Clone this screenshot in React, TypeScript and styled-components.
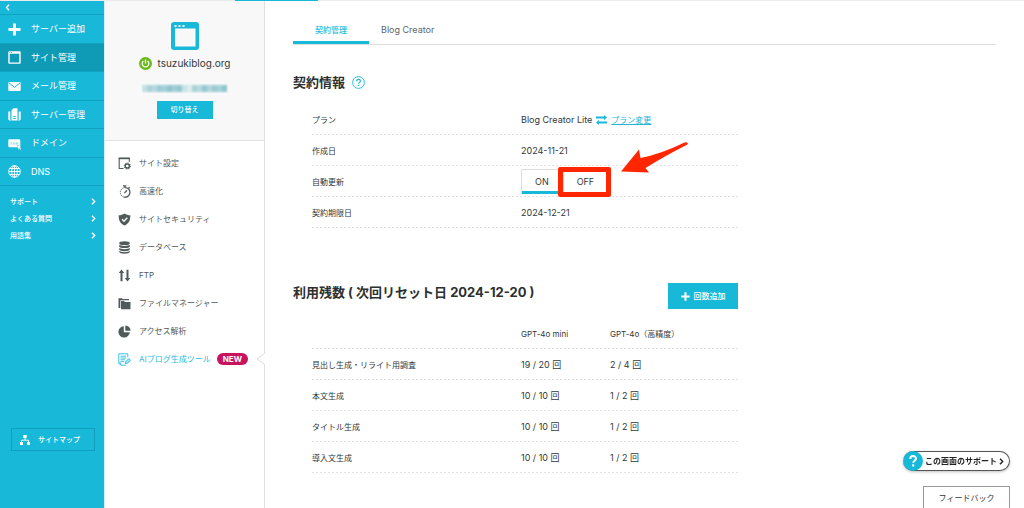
import React from "react";
import styled, { createGlobalStyle, css } from "styled-components";

const cyan = "#18b8d9";
const ink = "#333838";

const GlobalStyle = createGlobalStyle`
  *, *::before, *::after { box-sizing: border-box; }
  body {
    margin: 0;
    background: #fff;
    color: ${ink};
    font-family: Inter, "Noto Sans CJK JP", sans-serif;
    font-size: 8px;
    line-height: 12px;
  }
  button { font: inherit; color: inherit; border: 0; padding: 0; background: none; cursor: pointer; }
  a { color: inherit; text-decoration: none; }
  h1, h2, p, ul { margin: 0; padding: 0; }
  ul { list-style: none; }
  svg { display: block; flex: none; }
`;

const Page = styled.div`
  display: flex;
  flex-direction: column;
  min-height: 100vh;
`;

const TopStrip = styled.div`
  display: flex;
  height: 1px;
  background: #ebebeb;
  padding-left: 235px;
`;

const TopStripActive = styled.span`
  width: 83px;
  background: ${cyan};
`;

const Columns = styled.div`
  flex: 1;
  display: flex;
`;

const Sidebar = styled.nav`
  width: 104px;
  flex: none;
  display: flex;
  flex-direction: column;
  background: ${cyan};
  color: #fff;
`;

const Collapse = styled.button`
  height: 13px;
  padding-left: 5px;
`;

const PrimaryList = styled.ul`
  display: grid;
  grid-template-rows: repeat(6, 1fr);
  height: 172px;
  border-bottom: 1px solid #10a2c0;
`;

const PrimaryLink = styled.a<{ $active?: boolean }>`
  display: flex;
  align-items: center;
  gap: 10px;
  height: 100%;
  padding: 1px 0 0 8px;
  border-top: 1px solid #10a2c0;
  font-size: 9px;
  ${(p) => p.$active && css`background: #0f9ab6;`}
`;

const SupportList = styled.ul`
  padding: 7px 8px 0 10px;
`;

const SupportLink = styled.a`
  display: flex;
  align-items: center;
  justify-content: space-between;
  height: 17px;
  font-size: 7px;
  font-weight: 500;
`;

const SiteMapLink = styled.a`
  display: flex;
  align-items: center;
  gap: 8px;
  height: 23px;
  margin: auto 9px 57px 11px;
  padding-left: 8px;
  border: 1px solid #10a0be;
  font-size: 7px;
  font-weight: 500;
`;

const SitePanel = styled.aside`
  width: 161px;
  flex: none;
  border-left: 1px solid #d5eff6;
  border-right: 1px solid #dfdfdf;
`;

const SiteCard = styled.section`
  display: flex;
  flex-direction: column;
  align-items: center;
  height: 140px;
  padding-top: 21px;
  background: #f8f8f8;
  border-bottom: 1px solid #e2e2e2;
`;

const SiteName = styled.p`
  display: flex;
  align-items: center;
  gap: 6px;
  margin-top: 6px;
  font-size: 10px;
  line-height: 14px;
`;

const Mosaic = styled.div`
  margin: 13px 0 8px;
`;

const SwitchButton = styled.button`
  width: 56px;
  height: 18px;
  background: ${cyan};
  color: #fff;
  font-size: 7px;
  font-weight: 500;
`;

const SiteMenu = styled.ul`
  padding-top: 8px;
`;

const SiteMenuLink = styled.a<{ $active?: boolean }>`
  position: relative;
  display: flex;
  align-items: center;
  gap: 8px;
  height: 28px;
  padding-left: 13px;
  color: ${(p) => (p.$active ? "#27bde0" : "#505a5a")};
`;

const Notch = styled.svg`
  position: absolute;
  right: -1px;
  top: 7px;
`;

const NewBadge = styled.span`
  margin-left: -2px;
  padding: 0 6px;
  border-radius: 6px;
  background: #c8145f;
  color: #fff;
  font-weight: 700;
`;

const Main = styled.main`
  flex: 1;
  min-width: 0;
  padding: 13px 28px 0;
`;

const Tabs = styled.nav`
  display: flex;
  border-bottom: 1px solid #dedede;
`;

const Tab = styled.a<{ $active?: boolean }>`
  height: 30px;
  padding: 10px 12px 0;
  color: #606868;
  font-size: 9px;
  ${(p) =>
    p.$active &&
    css`
      width: 76px;
      padding: 10px 0 0;
      text-align: center;
      font-size: 8px;
      font-weight: 500;
      color: #27bde0;
      border-bottom: 3px solid ${cyan};
    `}
`;

const Section = styled.section<{ $gap: number }>`
  max-width: 445px;
  padding-top: ${(p) => p.$gap}px;
`;

const SectionHead = styled.div`
  display: flex;
  align-items: flex-start;
  height: 26px;
`;

const Heading = styled.h2`
  display: flex;
  align-items: center;
  gap: 7px;
  font-size: 13px;
  line-height: 18px;
  font-weight: 700;
  color: #2b3030;
`;

const AddButton = styled.button`
  display: flex;
  align-items: center;
  justify-content: center;
  gap: 4px;
  width: 70px;
  height: 26px;
  margin-left: auto;
  background: ${cyan};
  color: #fff;
  font-weight: 500;
`;

const TableWrap = styled.div<{ $top: number }>`
  padding: ${(p) => p.$top}px 0 0 19px;
`;

const DataTable = styled.table`
  width: 100%;
  border-collapse: separate;
  border-spacing: 0;
  table-layout: fixed;

  tr {
    background: repeating-linear-gradient(90deg, #e0e0e0 0 2px, transparent 2px 4px) left bottom / 100% 1px no-repeat;
  }
  th, td {
    height: 31px;
    padding: 0;
    text-align: left;
    font-weight: 400;
  }
  td { font-size: 9px; }
`;

const Col = styled.col<{ $w?: number }>`
  width: ${(p) => (p.$w ? `${p.$w}px` : "auto")};
`;

const PlanLine = styled.div`
  display: flex;
  align-items: center;
  gap: 4px;
`;

const PlanLink = styled.a`
  color: #27b4d6;
  font-size: 8px;
  text-decoration: underline;
`;

const Toggle = styled.div`
  position: relative;
  display: flex;
  width: max-content;
  height: 25px;
`;

const ToggleButton = styled.button<{ $on?: boolean }>`
  padding: 0 13px;
  border: 1px solid #ddd;
  border-bottom-width: 0;
  box-shadow: inset 0 ${(p) => (p.$on ? `-3px ${cyan}` : "-1px #ddd")};
`;

const Highlight = styled.span`
  position: absolute;
  left: 37px;
  top: -2px;
  width: 53px;
  height: 30px;
  border: 5px solid #ff2600;
  border-radius: 2px;
  pointer-events: none;
`;

const Arrow = styled.svg`
  position: absolute;
  left: 98px;
  top: -28px;
  pointer-events: none;
`;

const HelpPill = styled.button`
  position: fixed;
  right: 14px;
  bottom: 37px;
  display: flex;
  align-items: center;
  gap: 2px;
  height: 20px;
  padding-right: 5px;
  border: 1px solid #555;
  border-left: 0;
  border-radius: 10px;
  background: #fff;
  box-shadow: 0 1px 3px rgba(0, 0, 0, 0.25);
  font-weight: 700;
  color: #222;
`;

const Feedback = styled.button`
  position: fixed;
  right: 14px;
  bottom: 0;
  width: 87px;
  height: 22px;
  border: 1px solid #999;
  border-bottom: 0;
  background: #fff;
`;

const Chevron = ({ color = "#fff", flip = false }) => (
  <svg width="5" height="7" viewBox="0 0 5 7" fill="none" stroke={color} strokeWidth="1.4">
    <path d={flip ? "M4 .7 1.5 3.5 4 6.3" : "M1 .7 3.7 3.5 1 6.3"} />
  </svg>
);

const Plus = ({ size }: { size: number }) => (
  <svg width={size} height={size} viewBox="0 0 13 13" fill="#fff">
    <path d="M5 .5h3V5h4.5v3H8v4.5H5V8H.5V5H5z" />
  </svg>
);

const Icon = ({ children }: { children: React.ReactNode }) => (
  <svg width="13" height="13" viewBox="0 0 13 13" fill="currentColor">
    {children}
  </svg>
);

const primary = [
  { label: "サーバー追加", icon: <path d="M5 .5h3V5h4.5v3H8v4.5H5V8H.5V5H5z" /> },
  {
    label: "サイト管理",
    active: true,
    icon: <path fillRule="evenodd" d="M1.3.2h10.400a1 1 0 0 1 1 1v10.600a1 1 0 0 1-1 1H1.300a1 1 0 0 1-1-1V1.200a1 1 0 0 1 1-1zM1.700 2.800v8.600h9.600V2.800zM1.500 1.100v.8h.8v-.8zm1.500 0v.8h.8v-.8z" />,
  },
  {
    label: "メール管理",
    icon: (
      <>
        <rect x=".3" y="2" width="12.4" height="9" rx="1" />
        <path d="m.8 2.8 5.7 4.5 5.7-4.5" fill="none" stroke={cyan} strokeWidth="1" />
      </>
    ),
  },
  {
    label: "サーバー管理",
    icon: (
      <>
        <path d="M.3 3.500h2v8l.8 1H1.3l-1-1zM12.7 3.500h-2v8l-.8 1h1.8l1-1z" />
        <path fillRule="evenodd" d="M5.500.3h4V12.5h-6V2.3zM4.800 8v.8h3.400V8zm0 2v.8h3.400V10z" />
      </>
    ),
  },
  {
    label: "ドメイン",
    icon: (
      <>
        <rect x=".3" y="2.300" width="12" height="8" rx="1.3" />
        <path d="M2.5 6h1.600M5 6h1.600M7.500 6h2.600M2.500 7h1.600M5 7h1.600M7.500 7h2.600" stroke={cyan} strokeWidth=".5" />
        <path d="m9.200 8.200 4.300 1.600-1.400.9 1.300 1.500-1 .8-1.300-1.600-1 1.100z" stroke={cyan} strokeWidth=".4" />
      </>
    ),
  },
  {
    label: "DNS",
    icon: (
      <g fill="none" stroke="currentColor" strokeWidth=".9">
        <circle cx="6.5" cy="6.5" r="5.8" />
        <ellipse cx="6.5" cy="6.5" rx="2.8" ry="5.8" />
        <path d="M6.5.7v11.6M.7 6.5h11.6M1.6 3.5h9.8M1.6 9.5h9.8" />
      </g>
    ),
  },
];

const siteMenu = [
  {
    label: "サイト設定",
    icon: (
      <>
        <path d="M5.500 11.5H1.2V1.2h10.1v3.500" fill="none" stroke="currentColor" strokeWidth="1.1" />
        <path d="M.7.6h11.100v1.600H.7z" />
        <circle cx="9.3" cy="9" r="2.1" fill="none" stroke="currentColor" strokeWidth="1.5" />
        <circle cx="9.3" cy="9" r="3.1" fill="none" stroke="currentColor" strokeWidth="1" strokeDasharray="1.2 1.23" />
      </>
    ),
  },
  {
    label: "高速化",
    icon: (
      <g fill="none" stroke="currentColor">
        <path d="M6.8 2.6a4.8 4.8 0 1 1-1 9.4" strokeWidth="1.3" />
        <path d="M5.8 12a4.8 4.8 0 0 1 1-9.4" strokeWidth="1" strokeDasharray="1.3 .8" />
        <path d="M5 .8h3.4M6.7 .8v1.6M10.6 2.2l1.2 1.2" strokeWidth="1.2" />
        <path d="m6.4 8.1 2.6-2.8" strokeWidth="1.3" />
      </g>
    ),
  },
  {
    label: "サイトセキュリティ",
    icon: (
      <>
        <path d="M6.500.4c1.700 1.200 3.700 1.800 5.800 1.800.2 5-1.500 8.300-5.800 10.400C2.200 10.500.5 7.200.7 2.200 2.800 2.200 4.800 1.600 6.500.4z" />
        <path d="m4 6.300 2 2 3.300-3.600" fill="none" stroke="#fff" strokeWidth="1.300" />
      </>
    ),
  },
  {
    label: "データベース",
    icon: (
      <>
        <ellipse cx="6.500" cy="2.200" rx="5.300" ry="1.900" />
        <path d="M1.200 3.800c1.600 1.500 9 1.500 10.600 0v1.600c-.4 2.200-10.200 2.200-10.600 0zM1.200 7c1.600 1.500 9 1.500 10.600 0v1.600c-.4 2.200-10.200 2.200-10.600 0zM1.200 10.100c1.600 1.500 9 1.500 10.600 0v.9c-.4 2.300-10.200 2.300-10.600 0z" />
      </>
    ),
  },
  {
    label: "FTP",
    icon: <path d="M3.500.5 6.300 4H4.500v8.300h-2V4H.7zM9.500 12.500 6.700 9h1.800V.7h2V9h1.800z" />,
  },
  {
    label: "ファイルマネージャー",
    icon: (
      <>
        <path d="M.5 1.200h3.400l.8.900h6.300v1.200H2.300v7.700H.5z" />
        <path d="M3 4h3.100l.9 1h5.500v7.300H3z" />
      </>
    ),
  },
  {
    label: "アクセス解析",
    icon: (
      <>
        <path d="M5.800 1.200v6h6A5.700 5.700 0 1 1 5.800 1.200z" />
        <path d="M7.300.4a5.400 5.400 0 0 1 5.300 5.400H7.300z" />
      </>
    ),
  },
  {
    label: "AIブログ生成ツール",
    active: true,
    icon: (
      <g fill="none" stroke="currentColor" strokeWidth=".9">
        <path d="M9.800 4V.8H.8v9.400l2 2h5M2.500 3.200h5.700M2.500 5h5.700M2.500 6.800h4.500M2.500 8.600h3.500M.8 10h2v2" />
        <path d="m7.300 10.800.5-2.300 3-3 1.700 1.800-3 3z" fill="#a9e3f0" />
      </g>
    ),
  },
];

const usage = [
  ["見出し生成・リライト用調査", "19 / 20", "2 / 4"],
  ["本文生成", "10 / 10", "1 / 2"],
  ["タイトル生成", "10 / 10", "1 / 2"],
  ["導入文生成", "10 / 10", "1 / 2"],
];

const mosaicTones = [
  "#c3dfe3", "#a9d2d9", "#b6d9de", "#9ccbd4", "#a5d0d7", "#8fc5cf", "#a2ced6", "#93c7d0",
  "#c9e3e7", "#dceced", "#a9d2d9", "#b8dade", "#94c8d1", "#b1d6dc", "#9bcbd3", "#a8d1d8", "#8fc5cf",
];

export default function App() {
  return (
    <Page>
      <GlobalStyle />
      <TopStrip>
        <TopStripActive />
      </TopStrip>
      <Columns>
        <Sidebar>
          <Collapse aria-label="メニューを閉じる">
            <Chevron flip />
          </Collapse>
          <PrimaryList>
            {primary.map((item) => (
              <li key={item.label}>
                <PrimaryLink href="#" $active={item.active}>
                  <Icon>{item.icon}</Icon>
                  {item.label}
                </PrimaryLink>
              </li>
            ))}
          </PrimaryList>
          <SupportList>
            {["サポート", "よくある質問", "用語集"].map((label) => (
              <li key={label}>
                <SupportLink href="#">
                  {label}
                  <Chevron />
                </SupportLink>
              </li>
            ))}
          </SupportList>
          <SiteMapLink href="#">
            <svg width="10" height="10" viewBox="0 0 10 10" fill="#fff">
              <path d="M3.300 0h3.400v3H3.300zM0 7h3v3H0zM7 7h3v3H7z" />
              <path d="M5 3v2.200M1.500 7V5.200h7V7" fill="none" stroke="#fff" strokeWidth=".9" />
            </svg>
            サイトマップ
          </SiteMapLink>
        </Sidebar>

        <SitePanel>
          <SiteCard>
            <svg width="28" height="28" viewBox="0 0 28 28">
              <rect width="28" height="28" rx="3" fill={cyan} />
              <path d="M4 6.500h20.500v18H4z" fill="#f8f8f8" />
              <path d="M3.500 3h2v2h-2zM7.500 3h2v2h-2zM11.500 3h2v2h-2z" fill="#fff" />
            </svg>
            <SiteName>
              <svg width="13" height="13" viewBox="0 0 13 13" fill="none">
                <circle cx="6.500" cy="6.500" r="6.500" fill="#6bb81c" />
                <path d="M4.400 4.100a3.300 3.300 0 1 0 4.200 0M6.500 2.600v3.900" stroke="#fff" strokeWidth="1.300" />
              </svg>
              tsuzukiblog.org
            </SiteName>
            <Mosaic>
              <svg width="86" height="10" viewBox="0 0 86 10">
                <filter id="soften">
                  <feGaussianBlur stdDeviation="1" />
                </filter>
                <rect width="86" height="10" fill="#f3f7f8" />
                <g filter="url(#soften)">
                  {mosaicTones.map((tone, i) => (
                    <rect key={i} x={i * 5} y="2" width="5" height="7" fill={tone} />
                  ))}
                </g>
              </svg>
            </Mosaic>
            <SwitchButton>切り替え</SwitchButton>
          </SiteCard>
          <SiteMenu>
            {siteMenu.map((item) => (
              <li key={item.label}>
                <SiteMenuLink href="#" $active={item.active}>
                  <Icon>{item.icon}</Icon>
                  {item.label}
                  {item.active && (
                    <>
                      <NewBadge>NEW</NewBadge>
                      <Notch width="9" height="14" viewBox="0 0 9 14" fill="#fff">
                        <path d="M9 0v14H8.500V12.500L1 7l7.500-5.500V0z" />
                        <path d="M8.500 0v1.500L1 7l7.500 5.500V14" fill="none" stroke="#dcdcdc" />
                      </Notch>
                    </>
                  )}
                </SiteMenuLink>
              </li>
            ))}
          </SiteMenu>
        </SitePanel>

        <Main>
          <Tabs>
            <Tab href="#" $active>契約管理</Tab>
            <Tab href="#">Blog Creator</Tab>
          </Tabs>

          <Section $gap={28}>
            <SectionHead>
              <Heading>
                契約情報
                <svg width="13" height="13" viewBox="0 0 13 13" fill="none" stroke={cyan}>
                  <circle cx="6.500" cy="6.500" r="5.900" strokeWidth=".9" />
                  <path d="M4.700 5.200c0-2.500 3.700-2.300 3.700-.2 0 1.300-1.800 1.400-1.800 2.700M6.600 8.700v1.300" strokeWidth="1.200" />
                </svg>
              </Heading>
            </SectionHead>
            <TableWrap $top={5}>
              <DataTable>
                <colgroup>
                  <Col $w={209} />
                  <Col />
                </colgroup>
                <tbody>
                  <tr>
                    <th scope="row">プラン</th>
                    <td>
                      <PlanLine>
                        Blog Creator Lite
                        <svg width="11" height="10" viewBox="0 0 11 10" fill={cyan}>
                          <path d="M0 1.500h8V0l3 2.500L8 5V3.500H0zM11 6.500H3V5L0 7.500 3 10V8.500h8z" />
                        </svg>
                        <PlanLink href="#">プラン変更</PlanLink>
                      </PlanLine>
                    </td>
                  </tr>
                  <tr>
                    <th scope="row">作成日</th>
                    <td>2024-11-21</td>
                  </tr>
                  <tr>
                    <th scope="row">自動更新</th>
                    <td>
                      <Toggle>
                        <ToggleButton $on>ON</ToggleButton>
                        <ToggleButton>OFF</ToggleButton>
                        <Highlight />
                        <Arrow width="70" height="34" viewBox="0 0 70 34" fill="#ff2600">
                          <path d="M68.500 1.800Q67 1 65.500 1.500 42 13 21.500 17L20 8.500 2 30.500l28 1-3.500-4.500Q45 15.500 68 3.800 69.500 2.800 68.500 1.800z" />
                        </Arrow>
                      </Toggle>
                    </td>
                  </tr>
                  <tr>
                    <th scope="row">契約期限日</th>
                    <td>2024-12-21</td>
                  </tr>
                </tbody>
              </DataTable>
            </TableWrap>
          </Section>

          <Section $gap={55}>
            <SectionHead>
              <Heading>利用残数 ( 次回リセット日 2024-12-20 )</Heading>
              <AddButton>
                <Plus size={9} />
                回数追加
              </AddButton>
            </SectionHead>
            <TableWrap $top={9}>
              <DataTable>
                <colgroup>
                  <Col $w={209} />
                  <Col $w={89} />
                  <Col />
                </colgroup>
                <thead>
                  <tr>
                    <td />
                    <th scope="col">GPT-4o mini</th>
                    <th scope="col">GPT-4o（高精度）</th>
                  </tr>
                </thead>
                <tbody>
                  {usage.map(([name, mini, full]) => (
                    <tr key={name}>
                      <th scope="row">{name}</th>
                      <td>{mini} 回</td>
                      <td>{full} 回</td>
                    </tr>
                  ))}
                </tbody>
              </DataTable>
            </TableWrap>
          </Section>
        </Main>
      </Columns>

      <HelpPill>
        <svg width="20" height="20" viewBox="0 0 20 20" fill="none">
          <circle cx="10" cy="10" r="10" fill={cyan} />
          <path d="M7.200 8c0-4 5.800-3.600 5.800-.4 0 2-2.800 2.200-2.800 4.200M10.200 13.300v2.200" stroke="#fff" strokeWidth="2" />
        </svg>
        この画面のサポート
        <Chevron color="#222" />
      </HelpPill>
      <Feedback>フィードバック</Feedback>
    </Page>
  );
}
